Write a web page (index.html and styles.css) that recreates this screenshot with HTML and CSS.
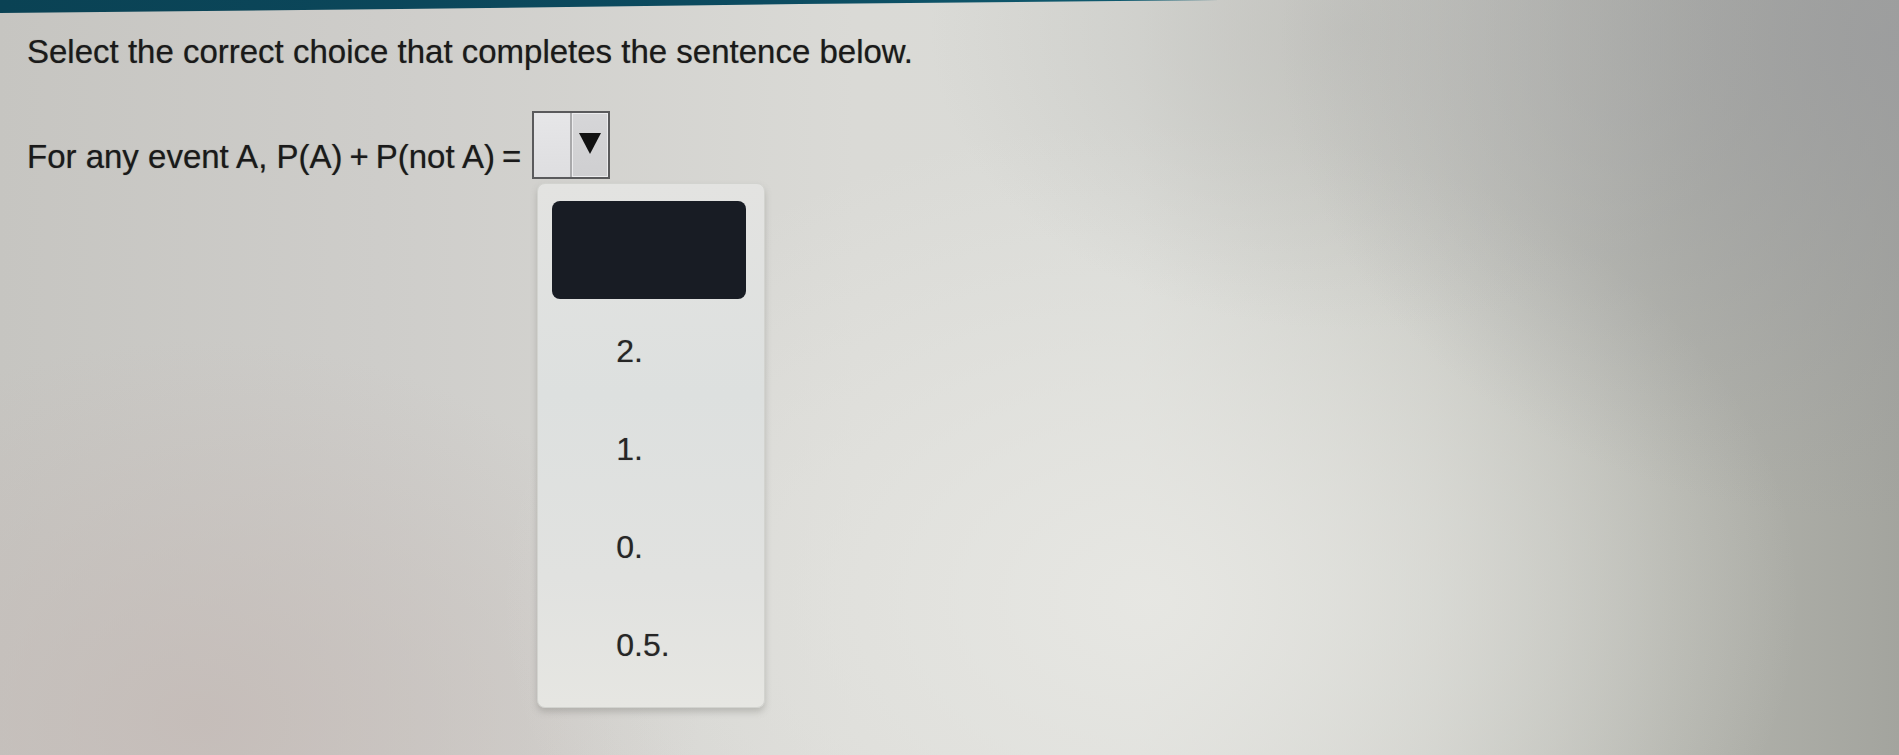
FILE: index.html
```html
<!DOCTYPE html>
<html lang="en">
<head>
<meta charset="utf-8">
<title>Select the correct choice</title>
<link rel="stylesheet" href="styles.css">
</head>
<body>
<div class="topbar"></div>
<main class="content">
  <p class="prompt">Select the correct choice that completes the sentence below.</p>
  <div class="sentence">
    <span class="stem">For any event A, P(A)<span class="op">+</span>P(not A)<span class="op">=</span></span>
    <div class="select">
      <div class="select-box">
        <span class="select-value"></span>
        <span class="select-button">
          <svg width="24" height="23" viewBox="0 0 24 23"><path d="M1 1 L23 1 L12 22 Z" fill="#111"/></svg>
        </span>
      </div>
      <ul class="menu">
        <li class="menu-item menu-item-active"></li>
        <li class="menu-item">2.</li>
        <li class="menu-item">1.</li>
        <li class="menu-item">0.</li>
        <li class="menu-item">0.5.</li>
      </ul>
    </div>
  </div>
</main>
</body>
</html>
```

FILE: styles.css
```css
html, body {
  margin: 0;
  padding: 0;
}

body {
  width: 1899px;
  height: 755px;
  overflow: hidden;
  font-family: "Liberation Sans", Arial, sans-serif;
  color: #1a1a1a;
  background:
    radial-gradient(ellipse 600px 480px at 1880px 40px, rgba(155,156,158,0.8), rgba(155,156,158,0) 100%),
    radial-gradient(ellipse 420px 300px at 1350px 30px, rgba(190,190,186,0.7), rgba(190,190,186,0) 100%),
    radial-gradient(ellipse 650px 480px at 1150px 600px, rgba(232,232,228,0.9), rgba(232,232,228,0) 100%),
    radial-gradient(ellipse 500px 380px at 200px 720px, rgba(196,186,182,0.8), rgba(196,186,182,0) 100%),
    linear-gradient(90deg, #c6c5c1 0%, #cecdca 20%, #dadad6 45%, #dadbd7 60%, #c9cac4 75%, #b3b4ad 88%, #a3a49e 100%);
}

.topbar {
  height: 14px;
  background: linear-gradient(90deg, #0a4254 0%, #0c4b60 40%, #12667a 75%, #6a969b 100%);
  clip-path: polygon(0 0, 1220px 0, 800px 4px, 400px 9px, 0 13px);
}

.content {
  padding-left: 27px;
}

.prompt {
  margin: 20px 0 0;
  font-size: 33px;
  line-height: 36px;
  letter-spacing: 0;
  text-shadow: 0 0 1px rgba(0,0,0,0.45);
}

.sentence {
  margin-top: 41px;
  display: flex;
  align-items: center;
  gap: 4px;
}

.stem {
  font-size: 33px;
  line-height: 36px;
  position: relative;
  top: 12px;
  text-shadow: 0 0 1px rgba(0,0,0,0.45);
}

.op {
  padding: 0 7px;
}

.select {
  position: relative;
}

.select-box {
  width: 74px;
  height: 64px;
  border: 2px solid #5a5a5c;
  display: flex;
  background: #e4e4e6;
}

.select-value {
  flex: 1;
  border-right: 2px solid #a9a9ab;
  background: linear-gradient(180deg, #e6e6e8, #dedee0);
}

.select-button {
  width: 36px;
  display: flex;
  justify-content: center;
  padding-top: 18px;
  background: linear-gradient(180deg, #d6d6d8, #cfcfd1);
  border: 1px solid #ececee;
  box-sizing: border-box;
}

.menu {
  position: absolute;
  left: 5px;
  top: 72px;
  width: 228px;
  margin: 0;
  padding: 17px 18px 13px 14px;
  box-sizing: border-box;
  list-style: none;
  background: linear-gradient(180deg, #e3e3e1 0%, #dde0df 40%, #e1e2e0 75%, #e6e6e2 100%);
  border: 1px solid #d2d3cf;
  border-radius: 8px;
  box-shadow: 0 4px 6px rgba(120,120,115,0.35);
}

.menu-item {
  height: 98px;
  display: flex;
  align-items: center;
  padding-left: 64px;
  font-size: 32px;
  color: #262626;
  text-shadow: 0 0 1px rgba(0,0,0,0.35);
}

.menu-item-active {
  background: #181c24;
  border-radius: 8px;
  margin-bottom: 3px;
}
```
